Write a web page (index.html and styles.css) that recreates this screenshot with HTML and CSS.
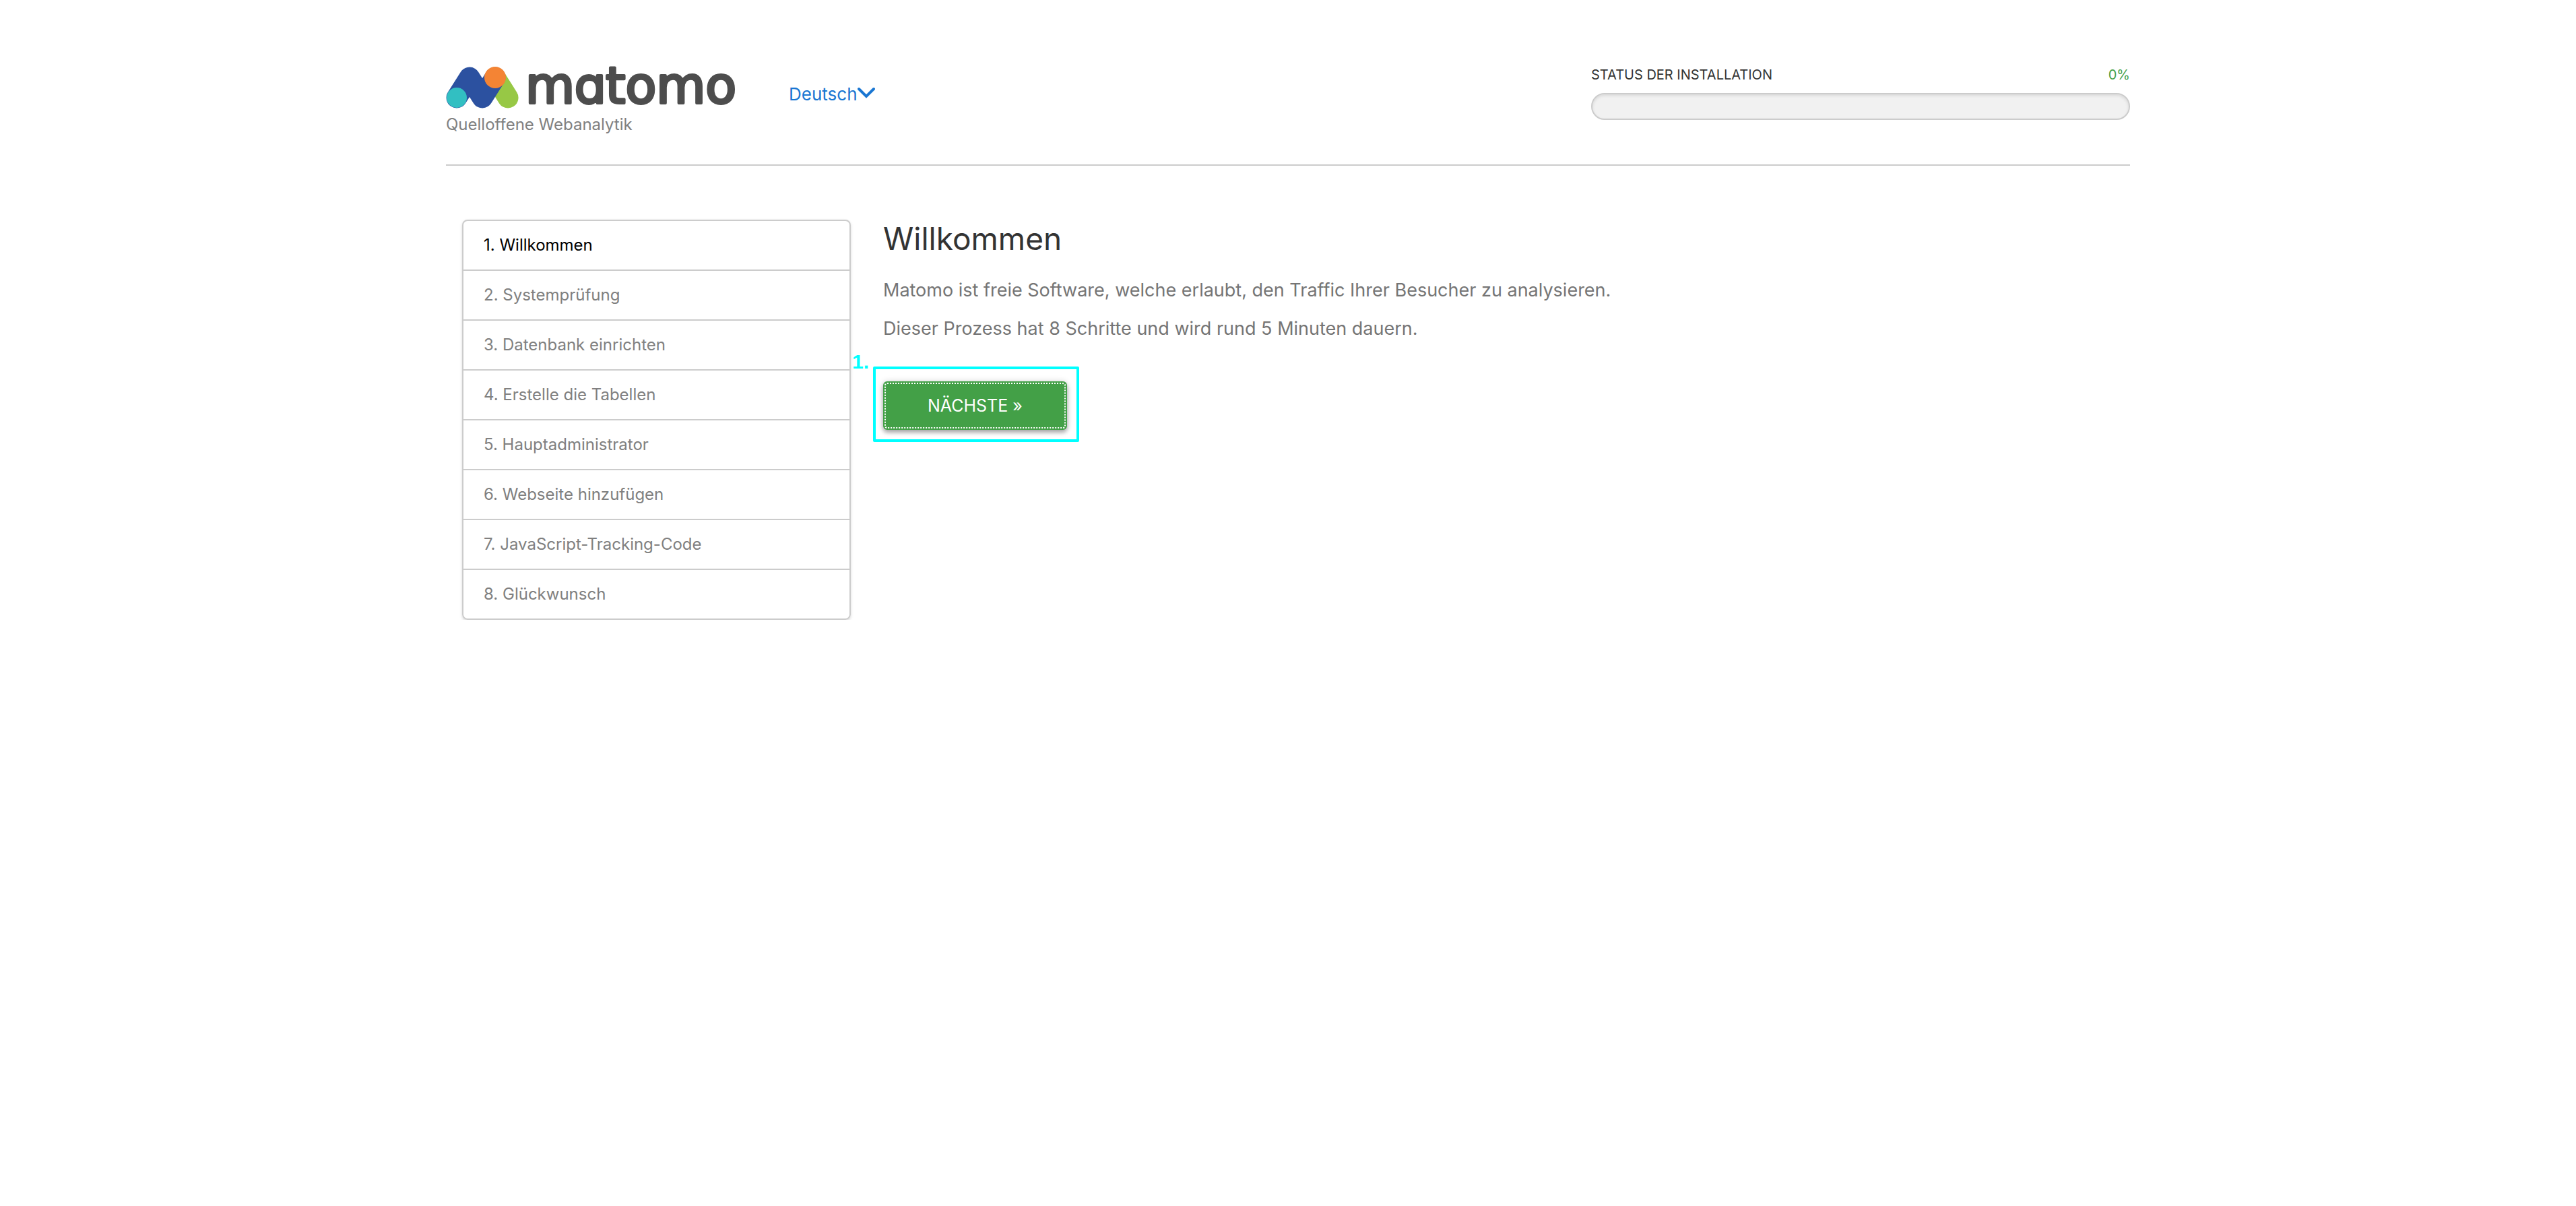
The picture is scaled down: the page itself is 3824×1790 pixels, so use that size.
FILE: index.html
```html
<!DOCTYPE html>
<html lang="de">
<head>
<meta charset="utf-8">
<meta name="viewport" content="width=device-width, initial-scale=1">
<title>Matomo › Installation</title>
<link rel="stylesheet" href="styles.css">
</head>
<body>
<div class="container">
  <header class="header">
    <div class="brand">
      <svg class="logo" viewBox="0 0 440 64" role="img" aria-label="Matomo">
        <path d="M73 17L92 47" fill="none" stroke="#97c845" stroke-width="31" stroke-linecap="round"/>
        <path d="M16 47L35 17L54 47L73 17" fill="none" stroke="#2c51a0" stroke-width="31" stroke-linecap="round" stroke-linejoin="round"/>
        <circle cx="16" cy="47" r="15" fill="#32bfc2"/>
        <circle cx="73" cy="17" r="16" fill="#f48434"/>
        <text class="wordmark" x="118" y="55">m<tspan class="round-a">a</tspan>tomo</text>
      </svg>
      <p class="slogan">Quelloffene Webanalytik</p>
    </div>
    <a class="language" href="#">Deutsch<svg class="chevron" viewBox="0 0 26 18" aria-hidden="true"><path d="M2 3L13 14L24 3"/></svg></a>
    <div class="status">
      <div class="status-text">
        <span>STATUS DER INSTALLATION</span>
        <span class="percent">0%</span>
      </div>
      <div class="progress" role="progressbar" aria-label="Status der Installation" aria-valuenow="0" aria-valuemin="0" aria-valuemax="100"></div>
    </div>
  </header>
  <div class="columns">
    <ol class="steps">
      <li class="step current" aria-current="step">1. Willkommen</li>
      <li class="step">2. Systemprüfung</li>
      <li class="step">3. Datenbank einrichten</li>
      <li class="step">4. Erstelle die Tabellen</li>
      <li class="step">5. Hauptadministrator</li>
      <li class="step">6. Webseite hinzufügen</li>
      <li class="step">7. JavaScript-Tracking-Code</li>
      <li class="step">8. Glückwunsch</li>
    </ol>
    <main class="content">
      <h1 class="title">Willkommen</h1>
      <p class="text">Matomo ist freie Software, welche erlaubt, den Traffic Ihrer Besucher zu analysieren.</p>
      <p class="text">Dieser Prozess hat 8 Schritte und wird rund 5 Minuten dauern.</p>
      <div class="action">
        <button class="next" type="button">NÄCHSTE »</button>
        <div class="marker"><span class="marker-label">1.</span></div>
      </div>
    </main>
  </div>
</div>
</body>
</html>
```

FILE: styles.css
```css
* {
  box-sizing: border-box;
}

body {
  margin: 0;
  background: #fff;
  color: #333;
  font-family: Inter, "Liberation Sans", sans-serif;
  font-size: 24px;
}

p,
h1,
ol {
  margin: 0;
  padding: 0;
}

.container {
  width: 90%;
  max-width: 2500px;
  margin: 0 auto;
  padding-top: 98px;
}

.header {
  display: flex;
  align-items: flex-start;
  padding-bottom: 44px;
  border-bottom: 2px solid #ccc;
}

.logo {
  display: block;
  width: 440px;
  height: 64px;
  overflow: visible;
}

.wordmark {
  font-family: "DejaVu Sans", sans-serif;
  font-size: 75px;
  fill: #4d4d4d;
  stroke: #4d4d4d;
  stroke-width: 4px;
  stroke-linejoin: round;
}

.round-a {
  font-family: Inter, sans-serif;
  font-feature-settings: "cv11";
}

.slogan {
  margin-top: 8px;
  color: #808080;
  line-height: 30px;
}

.language {
  display: flex;
  margin: 26px 0 0 69px;
  color: #1976d2;
  font-size: 26px;
  line-height: 32px;
  text-decoration: none;
}

.chevron {
  width: 26px;
  height: 18px;
  margin-top: 5px;
  fill: none;
  stroke: currentColor;
  stroke-width: 4px;
  stroke-linecap: round;
}

.status {
  width: 32%;
  margin-left: auto;
}

.status-text {
  display: flex;
  justify-content: space-between;
  font-size: 20px;
  line-height: 26px;
}

.percent {
  color: #43a047;
}

.progress {
  height: 40px;
  margin-top: 14px;
  border: 2px solid #ccc;
  border-radius: 20px;
  background: #f1f1f1;
  box-shadow: inset 0 2px 4px rgba(0, 0, 0, 0.1);
}

.columns {
  display: grid;
  grid-template-columns: 1fr 3fr;
  padding-top: 80px;
}

.steps {
  align-self: start;
  margin: 0 24px;
  border: 2px solid #ccc;
  border-radius: 8px;
  box-shadow: 0 2px 4px rgba(0, 0, 0, 0.15);
  list-style: none;
}

.step {
  padding: 0 28px 0 30px;
  color: #808080;
  line-height: 72px;
}

.step + .step {
  border-top: 2px solid #ccc;
}

.current {
  color: #000;
}

.content {
  padding: 0 24px;
}

.title {
  margin-bottom: 28px;
  font-size: 46px;
  font-weight: 400;
  line-height: 56px;
}

.text {
  margin-bottom: 15px;
  color: #757575;
  font-size: 27px;
  line-height: 42px;
}

.action {
  position: relative;
  width: fit-content;
  margin-top: 57px;
}

.next {
  display: block;
  height: 72px;
  padding: 0 66px;
  border: 0;
  border-radius: 6px;
  background: #43a047;
  box-shadow: 0 4px 6px rgba(0, 0, 0, 0.3), 0 0 10px rgba(0, 0, 0, 0.15);
  color: #fff;
  font: 25px/72px Inter, sans-serif;
  outline: 2px dotted #fff;
  outline-offset: -4px;
}

.marker {
  position: absolute;
  inset: -22px -18px -18px -15px;
  border: 4px solid #00ffff;
  border-radius: 2px;
  pointer-events: none;
}

.marker-label {
  position: absolute;
  right: 100%;
  bottom: 100%;
  margin: 0 10px -6px 0;
  color: #00ffff;
  font: bold 30px/34px "Liberation Sans", sans-serif;
}
```
